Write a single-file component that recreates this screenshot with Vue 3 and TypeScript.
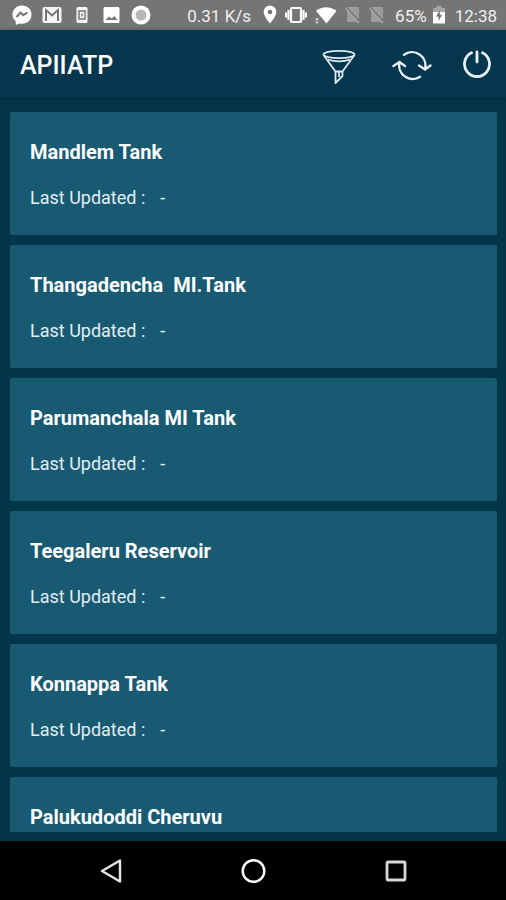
<script setup lang="ts">
interface Tank {
  name: string
  updated: string
}

const tanks: Tank[] = [
  { name: 'Mandlem Tank', updated: '-' },
  { name: 'Thangadencha  MI.Tank', updated: '-' },
  { name: 'Parumanchala MI Tank', updated: '-' },
  { name: 'Teegaleru Reservoir', updated: '-' },
  { name: 'Konnappa Tank', updated: '-' },
  { name: 'Palukudoddi Cheruvu', updated: '-' },
]
</script>

<template>
  <div class="screen">
    <div class="status">
      <div class="notices">
        <svg width="20" height="20" viewBox="0 0 20 20">
          <path d="M10 0.5C4.500.5.5 4.500.5 9.500c0 3 1.300 5.300 3.300 7V20l3.200-1.600c1 .3 2 .4 3 .4 5.500 0 9.500-4 9.500-9.300S15.500.5 10 .5z" fill="#fff" />
          <path d="M4.500 12l4-4.500 2.800 2.700L15.500 7.500" fill="none" stroke="#777" stroke-width="2" />
        </svg>
        <svg width="20" height="20" viewBox="0 0 20 20">
          <rect x="0.500" y="2" width="19" height="16" rx="2" fill="#f5f5f5" />
          <path d="M4 16V5l6 5.500L16 5v11" fill="none" stroke="#777" stroke-width="2" />
        </svg>
        <svg class="phone" width="12" height="20" viewBox="0 0 12 20">
          <rect x="0.500" y="2" width="11" height="16" rx="1.500" fill="#f5f5f5" />
          <rect x="3" y="6" width="6" height="8" fill="none" stroke="#777" stroke-width="1.500" />
          <path d="M5 8.500h2v3H5z" fill="#999" />
        </svg>
        <svg class="photo" width="17" height="20" viewBox="0 0 17 20">
          <rect x="0.500" y="2" width="16" height="16" rx="1.500" fill="#fff" />
          <path d="M2.500 15l3.500-3.500 2.500 2L11.500 11l3 4z" fill="#777" />
        </svg>
        <svg width="20" height="20" viewBox="0 0 20 20">
          <circle cx="10" cy="10" r="9.500" fill="#fff" />
          <circle cx="10" cy="10" r="5.500" fill="#b8b8b8" />
        </svg>
      </div>
      <div class="system">
        <span class="speed">0.31 K/s</span>
        <svg width="14" height="20" viewBox="0 0 14 20">
          <path d="M7 .8C3.300.8.7 3.400.7 7 .7 11.500 7 18.500 7 18.500S13.300 11.500 13.300 7C13.300 3.400 10.700.8 7 .8zM7 4.800a2.200 2.200 0 1 1 0 4.400 2.200 2.200 0 0 1 0-4.400z" fill="#fff" fill-rule="evenodd" />
        </svg>
        <svg width="22" height="20" viewBox="0 0 22 20">
          <rect x="6" y="3" width="10" height="14" rx="1" fill="none" stroke="#fff" stroke-width="2.200" />
          <path d="M3.500 5v10M18.500 5v10M1 7.500v5M21 7.500v5" stroke="#fff" stroke-width="2.200" />
        </svg>
        <svg width="22" height="20" viewBox="0 0 22 20">
          <path d="M1 6C7 1 15 1 21.500 6L11.500 18.500z" fill="#fff" />
          <path d="M2 13v2.500M2 16.500v2" stroke="#ccc" stroke-width="2.500" />
        </svg>
        <svg v-for="n in 2" :key="n" class="sim" width="16" height="20" viewBox="0 0 16 20">
          <path d="M2 2h12v15H2z" fill="#9c9c9c" />
          <path d="M0 1.500L15.500 18" stroke="#777" stroke-width="2.500" />
          <path d="M.5 3.500L14 18" stroke="#aaa" stroke-width="1.500" />
        </svg>
        <span class="percent">65%</span>
        <svg width="12" height="20" viewBox="0 0 12 20">
          <path d="M3.500 1h5v2H12v4H0V3h3.500z" fill="#a5a5a5" />
          <path d="M0 7h12v11.500H0z" fill="#fff" />
          <path d="M7 5L3 11.500h2.500V16L9 9.800H6.700z" fill="#707070" />
        </svg>
        <span class="clock">12:38</span>
      </div>
    </div>

    <header class="appbar">
      <h1>APIIATP</h1>
      <div class="actions">
        <button class="filter" type="button" aria-label="Filter">
          <svg width="34" height="36" viewBox="0 0 34 36" fill="none" stroke="#dce9f3" stroke-width="1.800" stroke-linejoin="round">
            <ellipse cx="17" cy="6.500" rx="15.500" ry="3.700" />
            <path d="M1.500 7L13.500 23.500V35L20.500 28V23.500L32.500 7M6 11.500c6 2.500 16 2.500 22 0M13.500 23.500h7M17 24v5" />
          </svg>
        </button>
        <button type="button" aria-label="Refresh">
          <svg width="40" height="36" viewBox="0 0 40 36" fill="none" stroke="#e8f2f8" stroke-width="2.400" stroke-linecap="round" stroke-linejoin="round">
            <path d="M12 6.700A13.500 13.500 0 0 1 33 21M27 17.500l6 4 5.500-4" />
            <path d="M28 28.800A13.500 13.500 0 0 1 7.500 14.500M1.500 18L7.500 14l5.500 4" />
          </svg>
        </button>
        <button type="button" aria-label="Log out">
          <svg width="30" height="36" viewBox="0 0 30 36" fill="none" stroke="#e8f2f8" stroke-width="2.800" stroke-linecap="round">
            <path d="M9.500 4.800A12.500 12.500 0 1 0 20.500 4.800M15 4v10" />
          </svg>
        </button>
      </div>
    </header>

    <main class="list">
      <article v-for="tank in tanks" :key="tank.name" class="card">
        <h2>{{ tank.name }}</h2>
        <p><span>Last Updated :</span><span>{{ tank.updated }}</span></p>
      </article>
    </main>

    <nav class="nav">
      <button type="button" aria-label="Back">
        <svg width="26" height="26" viewBox="0 0 26 26"><path d="M4 13L22 2.500v21z" fill="none" stroke="#e6e6e6" stroke-width="2.400" stroke-linejoin="round" /></svg>
      </button>
      <button type="button" aria-label="Home">
        <svg width="26" height="26" viewBox="0 0 26 26"><circle cx="13.500" cy="13" r="10.800" fill="none" stroke="#fff" stroke-width="2.400" /></svg>
      </button>
      <button type="button" aria-label="Recent apps">
        <svg width="26" height="26" viewBox="0 0 26 26"><rect x="5" y="4" width="18" height="18" rx="1" fill="none" stroke="#d8d8d8" stroke-width="2.800" /></svg>
      </button>
    </nav>
  </div>
</template>

<style>
body {
  margin: 0;
  background: #03354b;
}
</style>

<style scoped>
.screen {
  display: flex;
  flex-direction: column;
  height: 100vh;
  background: #03354b;
  color: #fff;
  font-family: Roboto, 'Liberation Sans', sans-serif;
}
svg {
  display: block;
  flex: none;
}
button {
  display: block;
  padding: 0;
  border: 0;
  background: none;
  cursor: pointer;
}
.status {
  display: flex;
  flex: none;
  justify-content: space-between;
  align-items: center;
  height: 30px;
  padding: 0 9px 0 12px;
  background: #757575;
  color: #f0f0f0;
  font-size: 17px;
  line-height: 30px;
  white-space: nowrap;
}
.notices,
.system {
  display: flex;
  align-items: center;
}
.notices {
  gap: 10px;
}
.phone {
  margin: 0 4px;
}
.photo {
  margin: 0 1px;
}
.system {
  gap: 8px;
}
.speed,
.percent,
.clock {
  padding-top: 2px;
}
.speed {
  margin-right: 4px;
}
.percent {
  margin-left: 2px;
  margin-right: -2px;
}
.clock {
  margin-left: 2px;
}
.appbar {
  display: flex;
  flex: none;
  justify-content: space-between;
  align-items: center;
  height: 68px;
  padding: 0 14px 0 20px;
  background: #04364d;
  box-shadow: 0 1px 5px rgba(0, 20, 35, 0.5);
}
h1 {
  margin: 0;
  padding-top: 3px;
  font-size: 25px;
  font-weight: 500;
  line-height: 32px;
}
.actions {
  display: flex;
  align-items: center;
  gap: 30px;
  padding-top: 4px;
}
.filter {
  margin-right: 6px;
}
.list {
  display: flex;
  flex: 1;
  flex-direction: column;
  gap: 10px;
  min-height: 0;
  margin: 14px 9px 9px 10px;
  overflow-y: auto;
  scrollbar-width: none;
}
.card {
  flex: none;
  padding: 28px 20px 25px;
  border-radius: 2px;
  background: #195a73;
}
h2 {
  margin: 0 0 22px;
  font-size: 20px;
  font-weight: 700;
  line-height: 24px;
  white-space: pre-wrap;
}
p {
  display: flex;
  gap: 15px;
  margin: 0;
  color: #e0eef4;
  font-size: 18px;
  line-height: 24px;
}
.nav {
  display: flex;
  flex: none;
  justify-content: center;
  align-items: center;
  gap: 116px;
  height: 59px;
  background: #000;
}
</style>
